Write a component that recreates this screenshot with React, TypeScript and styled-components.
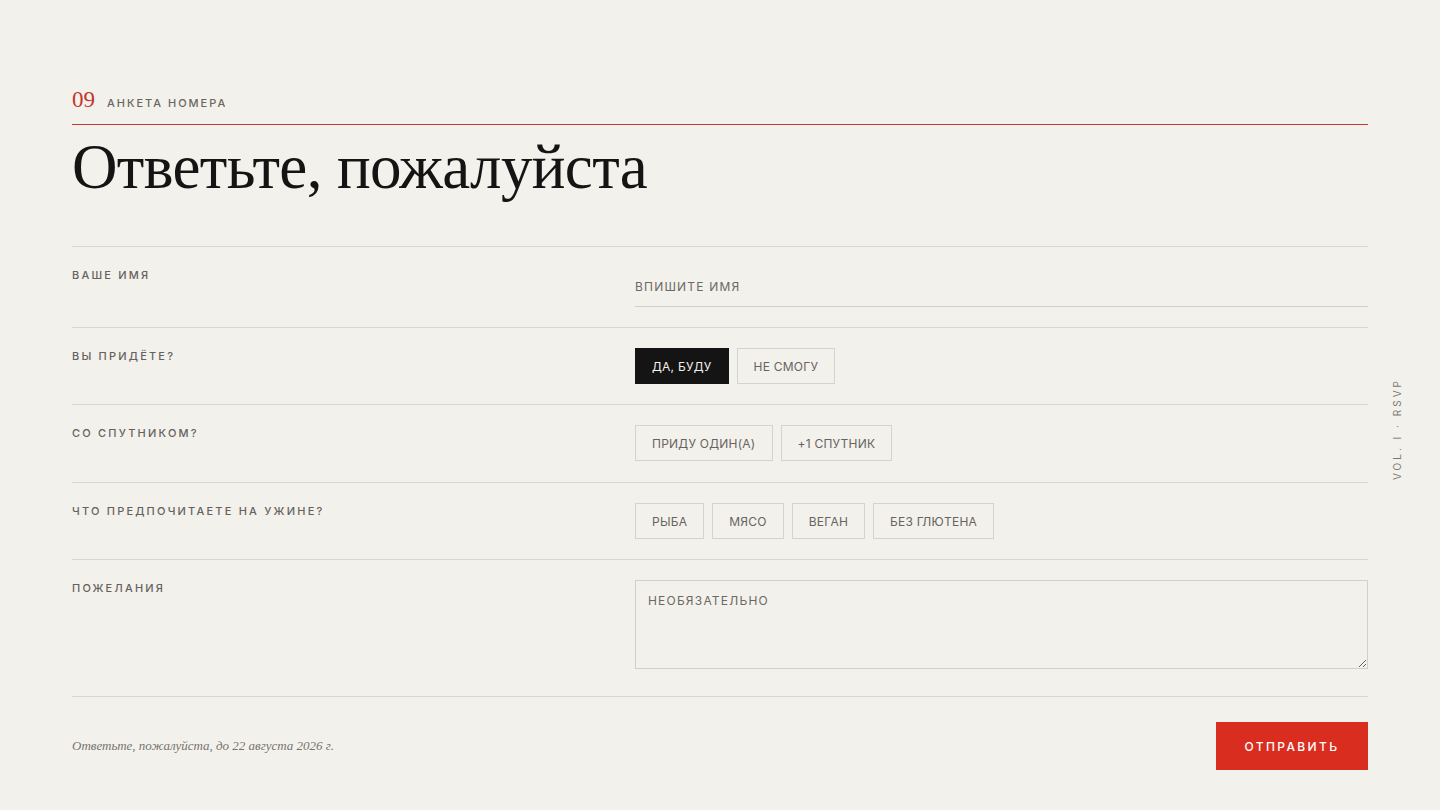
import React, { useState } from 'react'
import styled, { createGlobalStyle } from 'styled-components'

const GlobalStyle = createGlobalStyle`
    html, body {
        margin: 0;
        padding: 0;
        background: #f3f1ec;
    }
    * {
        box-sizing: border-box;
    }
`

const Page = styled.div`
    position: relative;
    min-height: 810px;
    padding: 87px 72px 40px;
    font-family: Inter, 'Liberation Sans', sans-serif;
    color: #141414;
`

const Eyebrow = styled.div`
    display: flex;
    align-items: flex-end;
    gap: 12px;
    height: 37px;
    padding-bottom: 11px;
`

const Rule = styled.hr`
    margin: 0;
    height: 1px;
    border: none;
    background: #c8372a;
`

const Number = styled.span`
    font-family: 'Liberation Serif', serif;
    font-size: 23px;
    line-height: 26px;
    color: #c0392b;
`

const EyebrowText = styled.span`
    padding-bottom: 2px;
    font-size: 11px;
    line-height: 16px;
    letter-spacing: 0.18em;
    color: #6a6762;
    font-weight: 500;
`

const Title = styled.h1`
    margin: 6px 0 0;
    font-family: 'Liberation Serif', serif;
    font-weight: 400;
    font-size: 63px;
    line-height: 72px;
    letter-spacing: -0.01em;
    color: #141414;
`

const Form = styled.form`
    margin-top: 43px;
`

const Row = styled.div<{ $extra?: number }>`
    display: grid;
    grid-template-columns: 563px 1fr;
    padding: 20px 0 ${(p) => 20 + (p.$extra ?? 0)}px;
    border-top: 1px solid #dad7d0;
`

const Label = styled.div`
    font-size: 11px;
    line-height: 16px;
    letter-spacing: 0.2em;
    font-weight: 500;
    color: #65625d;
    text-transform: uppercase;
`

const TextInput = styled.input`
    display: block;
    width: 100%;
    height: 40px;
    padding: 0;
    border: none;
    border-bottom: 1px solid #d3d0c9;
    background: transparent;
    font-family: Inter, 'Liberation Sans', sans-serif;
    font-size: 12px;
    letter-spacing: 0.1em;
    color: #141414;
    outline: none;

    &::placeholder {
        color: #6b6964;
        text-transform: uppercase;
    }
`

const Options = styled.div`
    display: flex;
    gap: 8px;
`

const Choice = styled.button<{ $active?: boolean }>`
    height: 36px;
    padding: 0 16px;
    border: 1px solid ${(p) => (p.$active ? '#141414' : '#d6d3cc')};
    background: ${(p) => (p.$active ? '#141414' : 'transparent')};
    color: ${(p) => (p.$active ? '#f3f1ec' : '#67645f')};
    font-family: Inter, 'Liberation Sans', sans-serif;
    font-size: 12px;
    letter-spacing: 0.02em;
    text-transform: uppercase;
    cursor: pointer;
`

const Notes = styled.textarea`
    display: block;
    width: 100%;
    height: 89px;
    padding: 12px;
    border: 1px solid #d3d0c9;
    background: transparent;
    font-family: Inter, 'Liberation Sans', sans-serif;
    font-size: 12px;
    letter-spacing: 0.1em;
    outline: none;

    &::placeholder {
        color: #6b6964;
        text-transform: uppercase;
    }
`

const Footer = styled.div`
    display: flex;
    justify-content: space-between;
    align-items: center;
    padding-top: 25px;
    border-top: 1px solid #dad7d0;
`

const Deadline = styled.p`
    margin: 0;
    font-family: 'Liberation Serif', serif;
    font-style: italic;
    font-size: 13px;
    color: #77746f;
`

const Submit = styled.button`
    width: 152px;
    height: 48px;
    border: none;
    background: #d92e1f;
    color: #fff;
    font-family: Inter, 'Liberation Sans', sans-serif;
    font-size: 12px;
    font-weight: 500;
    letter-spacing: 0.2em;
    cursor: pointer;
`

const SideMark = styled.div`
    position: absolute;
    right: 43px;
    top: 429px;
    transform: translate(50%, -50%) rotate(-90deg);
    white-space: nowrap;
    font-size: 10px;
    letter-spacing: 0.3em;
    color: #7a7772;
`

const attendance = ['Да, буду', 'Не смогу']
const company = ['Приду один(а)', '+1 спутник']
const menu = ['Рыба', 'Мясо', 'Веган', 'Без глютена']

const App = () => {
    const [coming, setComing] = useState('Да, буду')
    const [guest, setGuest] = useState('')
    const [food, setFood] = useState('')

    return (
        <>
            <GlobalStyle />
            <Page>
                <Eyebrow>
                    <Number>09</Number>
                    <EyebrowText>АНКЕТА НОМЕРА</EyebrowText>
                </Eyebrow>
                <Rule />
                <Title>Ответьте, пожалуйста</Title>
                <Form onSubmit={(e) => e.preventDefault()}>
                    <Row>
                        <Label>Ваше имя</Label>
                        <TextInput placeholder='Впишите имя' />
                    </Row>
                    <Row>
                        <Label>Вы придёте?</Label>
                        <Options>
                            {attendance.map((o) => (
                                <Choice type='button' key={o} $active={coming === o} onClick={() => setComing(o)}>
                                    {o}
                                </Choice>
                            ))}
                        </Options>
                    </Row>
                    <Row $extra={1}>
                        <Label>Со спутником?</Label>
                        <Options>
                            {company.map((o) => (
                                <Choice type='button' key={o} $active={guest === o} onClick={() => setGuest(o)}>
                                    {o}
                                </Choice>
                            ))}
                        </Options>
                    </Row>
                    <Row>
                        <Label>Что предпочитаете на ужине?</Label>
                        <Options>
                            {menu.map((o) => (
                                <Choice type='button' key={o} $active={food === o} onClick={() => setFood(o)}>
                                    {o}
                                </Choice>
                            ))}
                        </Options>
                    </Row>
                    <Row $extra={7}>
                        <Label>Пожелания</Label>
                        <Notes placeholder='Необязательно' />
                    </Row>
                    <Footer>
                        <Deadline>Ответьте, пожалуйста, до 22 августа 2026 г.</Deadline>
                        <Submit type='submit'>ОТПРАВИТЬ</Submit>
                    </Footer>
                </Form>
                <SideMark>VOL. I · RSVP</SideMark>
            </Page>
        </>
    )
}

export default App
